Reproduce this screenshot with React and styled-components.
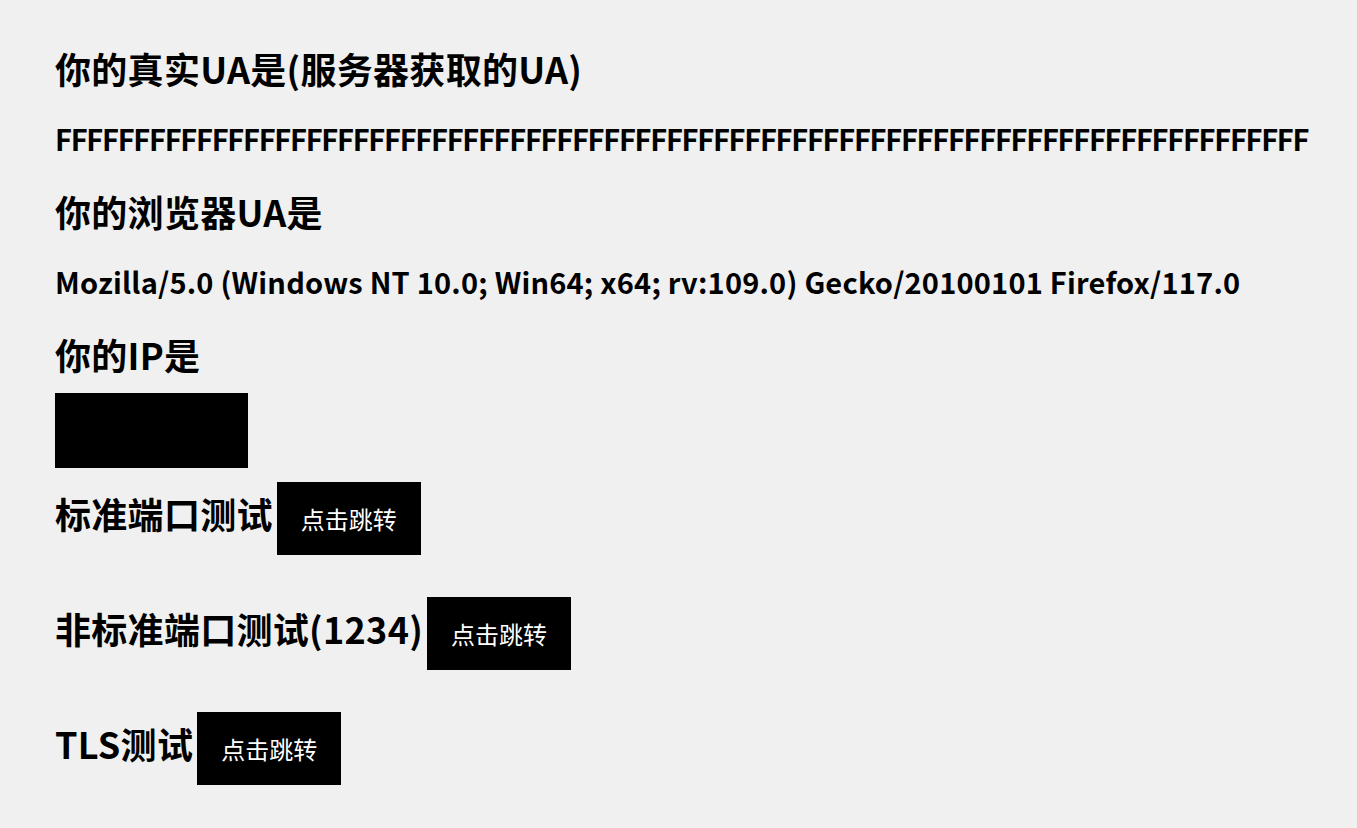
import React from 'react';
import styled, { createGlobalStyle } from 'styled-components';

const GlobalStyle = createGlobalStyle`
  html, body {
    margin: 0;
    padding: 0;
    background: #f0f0f0;
  }
  body {
    font-family: "Noto Sans CJK SC", "Noto Sans", sans-serif;
    color: #000;
  }
`

const Page = styled.div`
  padding: 12px 0 40px 55px;
`

const Title = styled.h1`
  font-size: 36px;
  line-height: 44px;
  font-weight: 700;
  margin: 34px 0 ${props => props.tight ? '17px' : '31px'};
  white-space: nowrap;
  letter-spacing: 0.3px;
`

const UaText = styled.div`
  font-size: 29px;
  line-height: 34px;
  font-weight: 700;
  white-space: nowrap;
  letter-spacing: ${props => props.spacing || 0}px;
`

const Masked = styled.div`
  width: 193px;
  height: 75px;
  background: #000;
`

const TestRow = styled.div`
  display: flex;
  align-items: baseline;
  gap: 4px;
  margin-top: ${props => props.first ? '14px' : '42px'};
`

const RowLabel = styled.span`
  font-size: 36px;
  line-height: 44px;
  font-weight: 700;
  white-space: nowrap;
  letter-spacing: 0.3px;
`

const JumpButton = styled.a`
  display: inline-block;
  background: #000;
  color: #fff;
  font-size: 24px;
  line-height: 33px;
  padding: 20px 24px;
  text-decoration: none;
  cursor: pointer;
`

const tests = [
  { label: '标准端口测试' },
  { label: '非标准端口测试(1234)' },
  { label: 'TLS测试' }
];

export default function App() {
  return (
    <Page>
      <GlobalStyle />
      <Title>你的真实UA是(服务器获取的UA)</Title>
      <UaText spacing={-1.3}>{'F'.repeat(80)}</UaText>
      <Title>你的浏览器UA是</Title>
      <UaText spacing={0.2}>Mozilla/5.0 (Windows NT 10.0; Win64; x64; rv:109.0) Gecko/20100101 Firefox/117.0</UaText>
      <Title tight>你的IP是</Title>
      <Masked />
      {tests.map((t, i) => (
        <TestRow key={t.label} first={i === 0}>
          <RowLabel>{t.label}</RowLabel>
          <JumpButton>点击跳转</JumpButton>
        </TestRow>
      ))}
    </Page>
  );
}
